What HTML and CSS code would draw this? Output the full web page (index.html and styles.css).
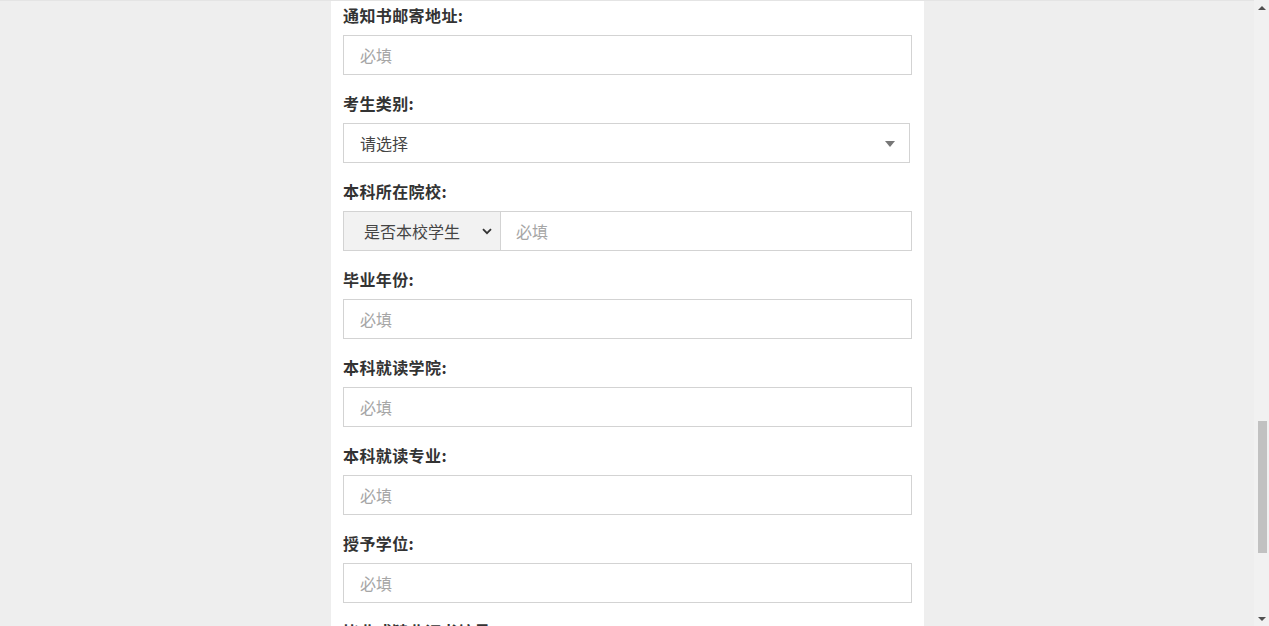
FILE: index.html
```html
<!DOCTYPE html>
<html lang="zh-CN">
<head>
<meta charset="utf-8">
<title>报名表</title>
<link rel="stylesheet" href="styles.css">
</head>
<body>
<div class="viewport">
  <main class="page">
    <form class="card">
      <div class="field">
        <label class="label">通知书邮寄地址:</label>
        <input class="input" type="text" placeholder="必填">
      </div>
      <div class="field">
        <label class="label">考生类别:</label>
        <div class="select">
          <span class="select-text">请选择</span>
          <span class="caret"></span>
        </div>
      </div>
      <div class="field">
        <label class="label">本科所在院校:</label>
        <div class="group">
          <div class="addon">
            <span>是否本校学生</span>
            <svg class="chev" width="10" height="7" viewBox="0 0 10 7"><path d="M1 1.2 L5 5.2 L9 1.2" fill="none" stroke="#333" stroke-width="1.8"/></svg>
          </div>
          <input class="input group-input" type="text" placeholder="必填">
        </div>
      </div>
      <div class="field">
        <label class="label">毕业年份:</label>
        <input class="input" type="text" placeholder="必填">
      </div>
      <div class="field">
        <label class="label">本科就读学院:</label>
        <input class="input" type="text" placeholder="必填">
      </div>
      <div class="field">
        <label class="label">本科就读专业:</label>
        <input class="input" type="text" placeholder="必填">
      </div>
      <div class="field">
        <label class="label">授予学位:</label>
        <input class="input" type="text" placeholder="必填">
      </div>
      <div class="field">
        <label class="label">毕业或肄业证书编号:</label>
        <input class="input" type="text" placeholder="必填">
      </div>
    </form>
  </main>
  <div class="scrollbar">
    <div class="arrow up"></div>
    <div class="track">
      <div class="track-top"></div>
      <div class="thumb"></div>
    </div>
    <div class="arrow down"></div>
  </div>
</div>
</body>
</html>
```
FILE: styles.css
```css
* { box-sizing: border-box; }
html, body {
  margin: 0;
  padding: 0;
  height: 626px;
  overflow: hidden;
}
body {
  background: #eeeeee;
  font-family: "Noto Sans CJK SC", "Noto Sans", sans-serif;
  color: #333;
}
.viewport {
  display: flex;
  height: 626px;
}
.page {
  flex: 1;
  display: flex;
  justify-content: center;
  overflow: hidden;
  border-top: 1px solid #e4e4e4;
}
.card {
  width: 593px;
  background: #fff;
  padding: 4px 12px 0 12px;
  margin: 0 0 0 1px;
  display: flex;
  flex-direction: column;
  height: 700px;
}
.field {
  display: flex;
  flex-direction: column;
  margin-bottom: 18px;
}
.label {
  font-size: 16px;
  font-weight: 700;
  line-height: 20px;
  color: #333;
  margin-bottom: 10px;
  letter-spacing: 0.4px;
}
.input {
  height: 40px;
  width: 569px;
  border: 1px solid #d3d3d3;
  background: #fff;
  padding: 0 16px;
  font-family: inherit;
  font-size: 16px;
  color: #333;
  outline: none;
}
.input::placeholder {
  color: #a6a6a6;
}
.select {
  height: 40px;
  width: 567px;
  border: 1px solid #d3d3d3;
  display: flex;
  align-items: center;
  justify-content: space-between;
  padding: 0 14px 0 16px;
  font-size: 16px;
  color: #444;
}
.caret {
  width: 0;
  height: 0;
  border-left: 5px solid transparent;
  border-right: 5px solid transparent;
  border-top: 6px solid #777;
  margin-top: 2px;
}
.group {
  display: flex;
  width: 569px;
  height: 40px;
}
.addon {
  width: 157px;
  height: 40px;
  background: #f2f2f2;
  border: 1px solid #d3d3d3;
  border-right: 0;
  display: flex;
  align-items: center;
  padding: 0 8px 0 20px;
  justify-content: space-between;
  font-size: 16px;
  color: #444;
}
.chev { margin-top: 1px; }
.group-input {
  flex: 1;
  width: auto;
  padding-left: 15px;
}
.scrollbar {
  width: 15px;
  height: 626px;
  background: #f1f1f1;
  display: flex;
  flex-direction: column;
}
.arrow {
  height: 15px;
  display: flex;
  justify-content: center;
  align-items: center;
}
.arrow.up::after {
  content: "";
  border-left: 4px solid transparent;
  border-right: 4px solid transparent;
  border-bottom: 4px solid #505050;
}
.arrow.down::after {
  content: "";
  border-left: 4px solid transparent;
  border-right: 4px solid transparent;
  border-top: 4px solid #505050;
}
.track {
  flex: 1;
  display: flex;
  flex-direction: column;
  align-items: center;
}
.track-top { height: 406px; }
.thumb {
  width: 9px;
  height: 132px;
  background: #c1c1c1;
  margin-left: 1px;
}
```
